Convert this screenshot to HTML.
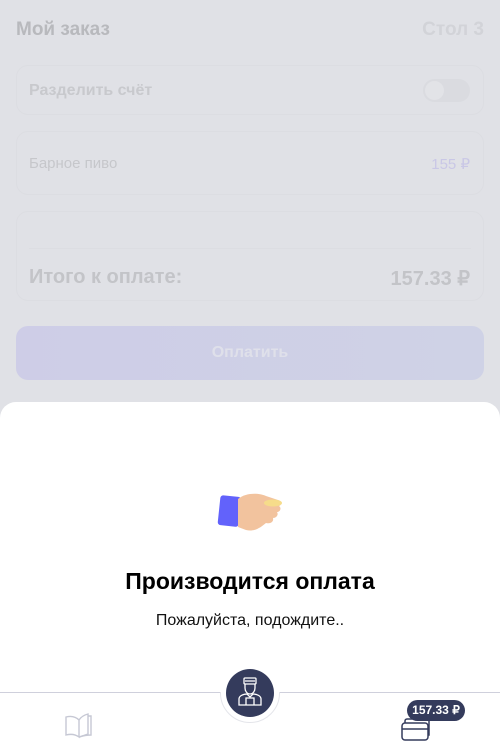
<!DOCTYPE html>
<html><head><meta charset="utf-8"><style>
*{margin:0;padding:0;box-sizing:border-box}
body{width:500px;height:756px;overflow:hidden;background:#e0e1e6;font-family:"Liberation Sans",sans-serif;position:relative}
.a{position:absolute}
.card{position:absolute;left:16px;width:468px;border:1px solid #dcdde2;border-radius:12px;background:#e0e1e6}
</style></head><body>
<div class="a" style="left:16px;top:19px;font-size:19px;font-weight:bold;color:#b8b9bd">Мой заказ</div>
<div class="a" style="right:16px;top:19px;font-size:19px;font-weight:bold;color:#d2d3d8">Стол 3</div>
<div class="card" style="top:65px;height:50px"></div>
<div class="a" style="left:29px;top:82px;font-size:16px;font-weight:bold;color:#c8c9cd">Разделить счёт</div>
<div class="a" style="left:423px;top:79px;width:47px;height:23px;border-radius:12px;background:#dadbe0"></div>
<div class="a" style="left:425px;top:81px;width:19px;height:19px;border-radius:50%;background:#e2e3e7"></div>
<div class="card" style="top:131px;height:64px"></div>
<div class="a" style="left:29px;top:155px;font-size:15px;color:#c6c7cb">Барное пиво</div>
<div class="a" style="right:30px;top:155px;font-size:15px;color:#c9c7e6">155 ₽</div>
<div class="card" style="top:211px;height:90px"></div>
<div class="a" style="left:29px;top:248px;width:442px;height:1px;background:#dcdde2"></div>
<div class="a" style="left:29px;top:266px;font-size:20px;font-weight:bold;color:#c3c4c8">Итого к оплате:</div>
<div class="a" style="right:30px;top:266px;font-size:20px;font-weight:bold;color:#c3c4c8">157.33 ₽</div>
<div class="a" style="left:16px;top:326px;width:468px;height:54px;border-radius:12px;background:linear-gradient(90deg,#cecde7,#cfd2e6);color:#dfe0ea;font-weight:bold;font-size:16px;text-align:center;line-height:54px">Оплатить</div>
<div class="a" style="left:0;top:402px;width:500px;height:354px;background:#fff;border-radius:16px 16px 0 0"></div>
<svg class="a" style="left:216px;top:490px" width="70" height="45" viewBox="0 0 70 45">
<rect x="3" y="6" width="21" height="30" rx="3" fill="#6262fb" transform="rotate(6 13 21)"/>
<path d="M22 9 C30 2 44 3 50 6 L62 10 C66 11 66 15 63 16 C66 18 64 22 61 22 C63 25 60 28 57 28 C58 32 54 34 50 33 C44 38 38 42 30 40 L22 37 Z" fill="#f2c39e"/>
<ellipse cx="57" cy="13" rx="9" ry="3.5" fill="#f6dc8a"/>
</svg>
<div class="a" style="left:0;top:568px;width:500px;text-align:center;font-size:23px;font-weight:bold;color:#000">Производится оплата</div>
<div class="a" style="left:0;top:612px;width:500px;text-align:center;font-size:16px;color:#111">Пожалуйста, подождите..</div>
<div class="a" style="left:0;top:692px;width:500px;height:1px;background:#cfd0dc"></div>
<div class="a" style="left:220px;top:663px;width:60px;height:60px;border-radius:50%;background:#fff;border:1px solid #e4e5ea;clip-path:inset(29px 0 0 0)"></div>
<div class="a" style="left:226px;top:669px;width:48px;height:48px;border-radius:50%;background:#343b5c"></div>
<svg class="a" style="left:236px;top:677px" width="28" height="32" viewBox="0 0 28 32" fill="none" stroke="#fff" stroke-width="1.3">
<rect x="8" y="1" width="12" height="6" rx="1"/><line x1="9" y1="4" x2="19" y2="4"/>
<path d="M9 7 v4 c0 3 2 6 5 6 s5-3 5-6 v-4"/>
<path d="M3 28 v-6 c0-3 4-5 8-5 l3 3 3-3 c4 0 8 2 8 5 v6 z"/>
<path d="M10 28 v-7 h8 v7"/>
</svg>
<svg class="a" style="left:64px;top:709px" width="32" height="32" viewBox="0 0 32 32" fill="none" stroke="#c6c8d4" stroke-width="1.4">
<path d="M2 8 c4-1 9-1 13 3 v17 c-4-3-9-3-13-2 z"/>
<path d="M15 11 c2-3 5-5 9-6 v20 c-4 1-7 3-9 3"/>
<path d="M24 7 h3 v19 c-5 0-9 1-12 2"/>
</svg>
<svg class="a" style="left:400px;top:715px" width="32" height="28" viewBox="0 0 32 28" fill="none" stroke="#343b5c" stroke-width="1.5">
<rect x="2" y="8" width="26" height="17" rx="3"/><line x1="2" y1="14" x2="28" y2="14"/>
<path d="M5 8 v-2 a2 2 0 0 1 2-2 h20 a2 2 0 0 1 2 2 v14 h-1"/>
</svg>
<div class="a" style="left:407px;top:700px;width:58px;height:21px;border-radius:11px;background:#343b5c;color:#fff;font-size:12px;font-weight:bold;text-align:center;line-height:21px">157.33 ₽</div>
</body></html>
